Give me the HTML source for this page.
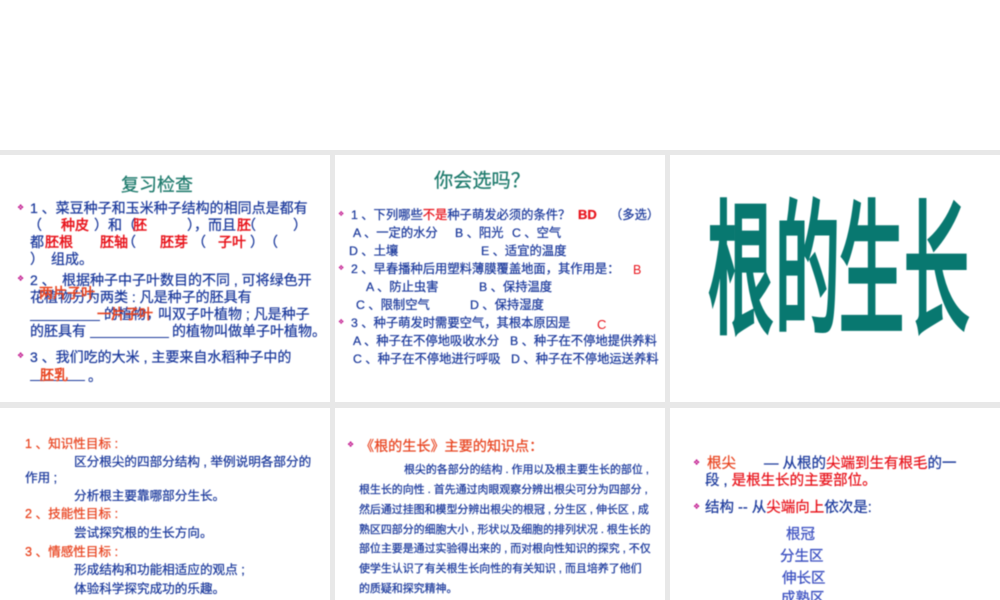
<!DOCTYPE html>
<html lang="zh">
<head>
<meta charset="utf-8">
<title>根的生长</title>
<style>
html,body{margin:0;padding:0;background:#fff}
#s{position:relative;width:1000px;height:600px;overflow:hidden;background:#fff;font-family:"Liberation Sans","Noto Sans CJK SC",sans-serif;color:#1c3a9c}
.band{position:absolute;background:#e8e8e8}
#c{position:absolute;left:0;top:0;width:1000px;height:600px;filter:blur(.4px)}
.t{position:absolute;white-space:pre;line-height:20px;height:20px;margin-top:-9.5px;-webkit-text-stroke:.25px currentColor}
.a{font-size:14px}
.b{font-size:12.3px}
.c{font-size:12.6px}
.d{font-size:10.95px}
.e{font-size:14.5px}
.r{color:#e8141c}
.o{color:#e8431f}
.a.r,.a.o{-webkit-text-stroke:.5px currentColor}
.u{position:absolute;height:1px;background:#1c3a9c}
.k{font-family:"DejaVu Sans",sans-serif;color:#c0148c;font-size:8px;-webkit-text-stroke:0}
.h{color:#1d7a6c}
.x{position:absolute;top:188px;font-family:"Noto Sans CJK SC",sans-serif;font-weight:400;font-size:65px;line-height:65px;color:#087870;white-space:pre;transform-origin:0 0;transform:scaleY(2.22);-webkit-text-stroke:2.5px #087870}
</style>
</head>
<body>
<div id="s">
<div class="band" style="left:0;top:150px;width:1000px;height:5px"></div>
<div class="band" style="left:0;top:402px;width:1000px;height:6px"></div>
<div class="band" style="left:330px;top:150px;width:5px;height:450px"></div>
<div class="band" style="left:665px;top:150px;width:5px;height:450px"></div>
<div id="c">
<!-- panel 1 -->
<div class="t h" style="left:121px;top:184px;font-size:18px">复习检查</div>
<div class="t k" style="left:17px;top:207px">❖</div>
<div class="t a" style="left:30px;top:207px">1 、菜豆种子和玉米种子结构的相同点是都有</div>
<div class="t a" style="left:28px;top:224px">（</div>
<div class="t a r" style="left:61px;top:224px">种皮</div>
<div class="t a" style="left:94px;top:224px">）和（</div>
<div class="t a r" style="left:133px;top:224px">胚</div>
<div class="t a" style="left:187px;top:224px">），而且</div>
<div class="t a r" style="left:237px;top:224px">胚</div>
<div class="t a" style="left:242px;top:224px">（</div>
<div class="t a" style="left:293px;top:224px">）</div>
<div class="t a" style="left:30px;top:241px">都</div>
<div class="t a r" style="left:45px;top:241px">胚根</div>
<div class="t a r" style="left:100px;top:241px">胚轴</div>
<div class="t a" style="left:122px;top:241px">（</div>
<div class="t a r" style="left:160px;top:241px">胚芽</div>
<div class="t a" style="left:192px;top:241px">（</div>
<div class="t a r" style="left:218px;top:241px">子叶</div>
<div class="t a" style="left:250px;top:241px">）</div>
<div class="t a" style="left:264px;top:241px">（</div>
<div class="t a" style="left:30px;top:258px">）</div>
<div class="t a" style="left:51px;top:258px">组成。</div>
<div class="t k" style="left:17px;top:278px">❖</div>
<div class="t a" style="left:30px;top:279px">2 、</div>
<div class="t a" style="left:62px;top:279px">根据种子中子叶数目的不同 , 可将绿色开</div>
<div class="t a" style="left:30px;top:296px">花植物分为两类 : 凡是种子的胚具有</div>
<div class="t a o" style="left:39px;top:292px">两片子叶</div>
<div class="u" style="left:30px;top:320px;width:70px"></div>
<div class="t a" style="left:104px;top:313px">的植物，</div>
<div class="t a" style="left:158px;top:313px">叫双子叶植物 ; 凡是种子</div>
<div class="t a o" style="left:97px;top:313px">一片子叶</div>
<div class="t a" style="left:30px;top:330px">的胚具有</div>
<div class="u" style="left:90px;top:337px;width:79px"></div>
<div class="t a" style="left:172px;top:330px">的植物叫做单子叶植物。</div>
<div class="t k" style="left:17px;top:355px">❖</div>
<div class="t a" style="left:30px;top:356px">3 、我们吃的大米 , 主要来自水稻种子中的</div>
<div class="u" style="left:30px;top:380px;width:55px"></div>
<div class="t a o" style="left:40px;top:374px">胚乳</div>
<div class="t a" style="left:88px;top:375px">。</div>
<!-- panel 2 -->
<div class="t h" style="left:434px;top:181px;font-size:19.2px">你会选吗？</div>
<div class="t k" style="left:338px;top:213px;font-size:7px">❖</div>
<div class="t b" style="left:351px;top:214px">1 、下列哪些<span class="r">不是</span>种子萌发必须的条件？</div>
<div class="t r" style="left:578px;top:214px;font-size:13px;font-weight:bold">BD</div>
<div class="t b" style="left:610px;top:214px">（多选）</div>
<div class="t b" style="left:353px;top:232px">A 、一定的水分</div>
<div class="t b" style="left:455px;top:232px">B 、阳光</div>
<div class="t b" style="left:512px;top:232px">C 、空气</div>
<div class="t b" style="left:349px;top:250px">D 、土壤</div>
<div class="t b" style="left:481px;top:250px">E 、适宜的温度</div>
<div class="t k" style="left:338px;top:267px;font-size:7px">❖</div>
<div class="t b" style="left:351px;top:268px">2 、早春播种后用塑料薄膜覆盖地面，其作用是：</div>
<div class="t r" style="left:633px;top:269px;font-size:12.5px;-webkit-text-stroke:0">B</div>
<div class="t b" style="left:366px;top:286px">A 、防止虫害</div>
<div class="t b" style="left:479px;top:286px">B 、保持温度</div>
<div class="t b" style="left:356px;top:304px">C 、限制空气</div>
<div class="t b" style="left:470px;top:304px">D 、保持湿度</div>
<div class="t k" style="left:338px;top:321px;font-size:7px">❖</div>
<div class="t b" style="left:351px;top:322px">3 、种子萌发时需要空气，其根本原因是</div>
<div class="t r" style="left:597px;top:324px;font-size:13px;-webkit-text-stroke:0">C</div>
<div class="t b" style="left:353px;top:340px">A 、种子在不停地吸收水分</div>
<div class="t b" style="left:510px;top:340px">B 、种子在不停地提供养料</div>
<div class="t b" style="left:353px;top:358px">C 、种子在不停地进行呼吸</div>
<div class="t b" style="left:511px;top:358px">D 、种子在不停地运送养料</div>
<!-- panel 3 -->
<div class="x" style="left:708px">根</div>
<div class="x" style="left:775px">的</div>
<div class="x" style="left:839px">生</div>
<div class="x" style="left:904px">长</div>
<!-- panel 4 -->
<div class="t c o" style="left:25px;top:443px">1 、知识性目标 :</div>
<div class="t c" style="left:74px;top:461px">区分根尖的四部分结构 , 举例说明各部分的</div>
<div class="t c" style="left:25px;top:477px">作用 ;</div>
<div class="t c" style="left:74px;top:495px">分析根主要靠哪部分生长。</div>
<div class="t c o" style="left:25px;top:513px">2 、技能性目标 :</div>
<div class="t c" style="left:74px;top:532px">尝试探究根的生长方向。</div>
<div class="t c o" style="left:25px;top:551px">3 、情感性目标 :</div>
<div class="t c" style="left:74px;top:569px">形成结构和功能相适应的观点 ;</div>
<div class="t c" style="left:74px;top:588px">体验科学探究成功的乐趣。</div>
<!-- panel 5 -->
<div class="t k" style="left:347px;top:444px">❖</div>
<div class="t o" style="left:360px;top:445px;font-size:14.1px">《根的生长》主要的知识点：</div>
<div class="t d" style="left:404px;top:469px">根尖的各部分的结构 . 作用以及根主要生长的部位 ,</div>
<div class="t d" style="left:359px;top:489px">根生长的向性 . 首先通过肉眼观察分辨出根尖可分为四部分 ,</div>
<div class="t d" style="left:359px;top:509px">然后通过挂图和模型分辨出根尖的根冠 , 分生区 , 伸长区 , 成</div>
<div class="t d" style="left:359px;top:529px">熟区四部分的细胞大小 , 形状以及细胞的排列状况 . 根生长的</div>
<div class="t d" style="left:359px;top:548px">部位主要是通过实验得出来的 , 而对根向性知识的探究 , 不仅</div>
<div class="t d" style="left:359px;top:568px">使学生认识了有关根生长向性的有关知识 , 而且培养了他们</div>
<div class="t d" style="left:359px;top:588px">的质疑和探究精神。</div>
<!-- panel 6 -->
<div class="t k" style="left:693px;top:462px">❖</div>
<div class="t e o" style="left:707px;top:463px">根尖</div>
<div class="t e" style="left:764px;top:463px">— 从根的<span class="r">尖端到生有根毛</span>的一</div>
<div class="t e" style="left:705px;top:480px">段 , <span class="r">是根生长的主要部位。</span></div>
<div class="t k" style="left:693px;top:506px">❖</div>
<div class="t e" style="left:705px;top:507px">结构 -- 从<span class="r">尖端向上</span>依次是:</div>
<div class="t e" style="left:786px;top:534px;color:#3a4fc0">根冠</div>
<div class="t e" style="left:780px;top:556px;color:#3a4fc0">分生区</div>
<div class="t e" style="left:782px;top:578px;color:#3a4fc0">伸长区</div>
<div class="t e" style="left:781px;top:598px;color:#3a4fc0">成熟区</div>
</div>
</div>
</body>
</html>
